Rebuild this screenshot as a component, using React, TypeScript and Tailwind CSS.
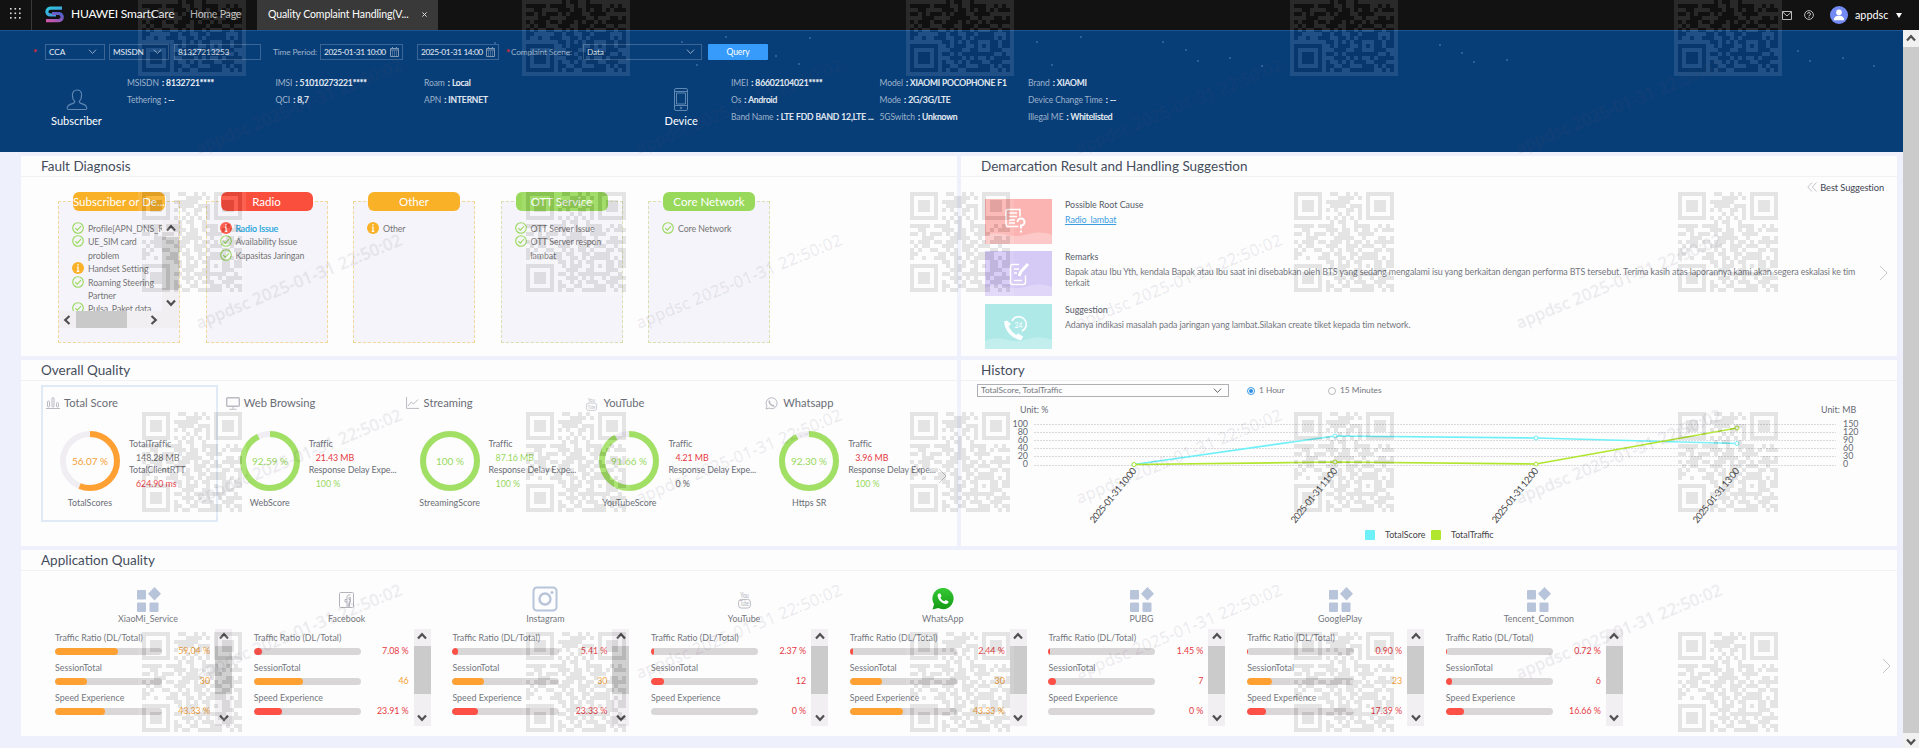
import type { ReactNode } from 'react'
import clsx from 'clsx'

type Tone = 'green' | 'orange' | 'red' | 'gray'

const textTone: Record<Tone, string> = {
  green: 'text-[#98d95b]',
  orange: 'text-[#f59f33]',
  red: 'text-[#e6393f]',
  gray: 'text-[#666]',
}

const QR = [
  '1111111001100101001111111',
  '1000001000011110101000001',
  '1011101011111100001011101',
  '1011101001111011101011101',
  '1011101010100110101011101',
  '1000001000010100101000001',
  '1111111010101010101111111',
  '0000000001011001000000000',
  '1111101111001001111001010',
  '0011000011101101011010111',
  '1101011101011100111100000',
  '0001110000111110010001101',
  '1011101101110101101011111',
  '0101100011100111011100100',
  '1010011001010110100011011',
  '1100000110110011011110001',
  '1001001110011010111110101',
  '0000000011010101100011011',
  '1111111001011100101011011',
  '1000001000111001100011100',
  '1011101011010111111110010',
  '1011101000111010100101111',
  '1011101010010101110011100',
  '1000001011001100011101011',
  '1111111010110011111100101',
]

function Watermark() {
  const codes = []
  for (let y = -28; y < 748; y += 220) {
    for (let x = 142; x < 1900; x += 384) {
      codes.push(<use key={`${x}-${y}`} href="#qr" x={x} y={y} />)
    }
  }
  const stamps = []
  for (let y = 154; y < 760; y += 175) {
    for (let x = 199; x < 1800; x += 440) {
      stamps.push(
        <text key={`${x}-${y}`} transform={`translate(${x} ${y}) rotate(-22.5)`} textLength="221">
          appdsc 2025-01-31 22:50:02
        </text>
      )
    }
  }
  return (
    <svg className="absolute inset-0 pointer-events-none" width="1919" height="748">
      <defs>
        <g id="qr">
          <rect x="-4" y="-4" width="108" height="108" fill="#fff" />
          {QR.map((row, y) =>
            [...row].map((c, x) => c === '1' && <rect key={`${x}-${y}`} x={x * 4} y={y * 4} width="4" height="4" />)
          )}
        </g>
      </defs>
      <g opacity="0.1" shapeRendering="crispEdges">{codes}</g>
      <g
        className="[font-family:'Noto_Sans',sans-serif]"
        fontSize="16.5"
        fill="#5a4a60"
        fillOpacity="0.1"
        stroke="#5a4a60"
        strokeOpacity="0.04"
        strokeWidth="0.8"
      >
        {stamps}
      </g>
    </svg>
  )
}

function Arrow({ dir }: { dir: 'up' | 'down' | 'left' | 'right' }) {
  return (
    <svg
      className={clsx('w-[10px] h-[10px]', dir === 'down' && 'rotate-180', dir === 'left' && '-rotate-90', dir === 'right' && 'rotate-90')}
      viewBox="0 0 10 10"
      fill="none"
      stroke="#505050"
      strokeWidth="2.2"
    >
      <path d="M1 7.5L5 3.2L9 7.5" />
    </svg>
  )
}

function Chevron({ className }: { className?: string }) {
  return (
    <svg className={className} viewBox="0 0 10 6" fill="none" stroke="currentColor" strokeWidth="1">
      <path d="M1 .7L5 5L9 .7" />
    </svg>
  )
}

function NextArrow() {
  return (
    <svg className="w-[9px] h-[16px] text-[#c9c6cc]" viewBox="0 0 9 16" fill="none" stroke="currentColor" strokeWidth="1">
      <path d="M1 1L8 8L1 15" />
    </svg>
  )
}

function Calendar() {
  return (
    <svg
      className="w-[9px] h-[10px] shrink-0 ml-auto mr-[3px] text-[#7d97b5]"
      viewBox="0 0 9 10"
      fill="none"
      stroke="currentColor"
      strokeWidth="1"
    >
      <path d="M.5 1.5h8v8h-8zM0 3h9M2.5 0v2M6.5 0v2" />
      <path d="M2.5 4v5M4.5 4v5M6.5 4v5" strokeOpacity=".5" />
    </svg>
  )
}

function TopBar() {
  return (
    <header className="h-[30px] shrink-0 bg-[#121212] flex items-center text-white">
      <div className="w-[32px] h-full border-r border-[#3a3a3a] flex items-center justify-center pb-1">
        <svg className="w-[11px] h-[11px]" viewBox="0 0 11 11" fill="#e0e0e0">
          {[0, 4.5, 9].map((y) => [0, 4.5, 9].map((x) => <rect key={`${x}${y}`} x={x} y={y} width="1.6" height="1.6" />))}
        </svg>
      </div>
      <svg className="w-[20px] h-[17px] ml-[12px] mb-[2px]" viewBox="0 0 20 17" fill="none">
        <defs>
          <linearGradient id="logoTop" x1="0" y1="0" x2="1" y2="1">
            <stop stopColor="#2fc6dd" />
            <stop offset="1" stopColor="#4a8fe0" />
          </linearGradient>
          <linearGradient id="logoBottom" x1="1" y1="0" x2="0" y2="1">
            <stop stopColor="#4b5fd0" />
            <stop offset="1" stopColor="#d255a8" />
          </linearGradient>
        </defs>
        <path d="M18 2.2H6.5a3.5 3.5 0 0 0-3 5.5Q4.5 9 7 9h5" stroke="url(#logoTop)" strokeWidth="3.2" />
        <path d="M8 7.5h7q3.2.5 3.2 3.6t-3.2 3.6H2" stroke="url(#logoBottom)" strokeWidth="3.2" />
      </svg>
      <span className="ml-[7px] w-[119px] text-[12px] tracking-[-0.2px] mb-[2px]">HUAWEI SmartCare</span>
      <span className="w-[67px] text-[10.5px] tracking-[-0.2px] text-[#c4c4c4] mb-px">Home Page</span>
      <div className="w-[181px] h-full bg-[#393939] flex items-center pl-[11px] pb-px text-[10.5px]">
        <span className="w-[154px] whitespace-nowrap tracking-[-0.1px]">Quality Complaint Handling(V...</span>
        <svg className="w-[5px] h-[5px]" viewBox="0 0 6 6" stroke="#ddd" strokeWidth="1.2">
          <path d="M.5 .5l5 5M5.5 .5l-5 5" />
        </svg>
      </div>
      <div className="ml-auto flex items-center pr-[17px]">
        <svg className="w-[10px] h-[9px]" viewBox="0 0 10 9" fill="none" stroke="#bbb">
          <path d="M.5 .5h9v8h-9zM.5 .8L5 5L9.5 .8" />
        </svg>
        <svg className="w-[10px] h-[10px] ml-[12px]" viewBox="0 0 10 10" fill="none" stroke="#bbb">
          <circle cx="5" cy="5" r="4.4" />
          <path d="M3.5 4a1.5 1.5 0 1 1 1.5 1.5v1M5 7v1" />
        </svg>
        <svg className="w-[18px] h-[18px] ml-[16px]" viewBox="0 0 18 18">
          <circle cx="9" cy="9" r="9" fill="#7389f3" />
          <circle cx="9" cy="6.4" r="2.8" fill="#fff" />
          <path d="M3.8 14.2c0-3 2-4.4 5.2-4.4s5.2 1.4 5.2 4.4z" fill="#fff" />
        </svg>
        <span className="ml-[7px] w-[41px] text-[10.8px]">appdsc</span>
        <svg className="w-[6px] h-[5px]" viewBox="0 0 6 5" fill="#fff">
          <path d="M0 0h6L3 5z" />
        </svg>
      </div>
    </header>
  )
}

function Box({ children, className }: { children: ReactNode; className: string }) {
  return (
    <div className={clsx('h-[16px] border border-[#3b6594] flex items-center pl-[3px] text-[#e6edf5] whitespace-nowrap', className)}>
      {children}
    </div>
  )
}

const subscriberInfo = [
  ['MSISDN', '8132721****'],
  ['IMSI', '51010273221****'],
  ['Roam', 'Local'],
  ['Tethering', '--'],
  ['QCI', '8,7'],
  ['APN', 'INTERNET'],
]

const deviceInfo = [
  ['IMEI', '86602104021****'],
  ['Model', 'XIAOMI POCOPHONE F1'],
  ['Brand', 'XIAOMI'],
  ['Os', 'Android'],
  ['Mode', '2G/3G/LTE'],
  ['Device Change Time', '--'],
  ['Band Name', 'LTE FDD BAND 12,LTE ...'],
  ['5GSwitch', 'Unknown'],
  ['Illegal ME', 'Whitelisted'],
]

function InfoGrid({ items }: { items: string[][] }) {
  return (
    <div className="grid grid-cols-[148.5px_148.5px_148.5px] auto-rows-[17px] content-start pt-px text-[8.5px] leading-[17px] tracking-[-0.1px]">
      {items.map(([label, value]) => (
        <div key={label} className="whitespace-nowrap text-[#9db2ca]">
          {label} <span className="ml-[1px] text-[#f2f6fa] [-webkit-text-stroke:0.2px_#f2f6fa]">: {value}</span>
        </div>
      ))}
    </div>
  )
}

const stars = [
  [682, 42], [726, 37], [810, 38], [776, 56], [799, 64], [697, 65], [1037, 42], [1081, 37], [1163, 42], [1186, 50],
  [1198, 61], [1230, 58], [1262, 66], [1052, 65], [1440, 45], [1462, 53], [1474, 62], [1507, 60], [1798, 51],
  [1810, 61], [1843, 58], [1874, 66], [495, 43],
]

function SearchPanel() {
  return (
    <section className="relative h-[122px] shrink-0 bg-[#083e78] border-t border-[#1c5491]">
      <svg className="absolute left-0 -top-[31px]" width="1903" height="100" fill="#3f74ad">
        {stars.map(([x, y]) => (
          <circle key={`${x}-${y}`} cx={x} cy={y} r="0.9" />
        ))}
      </svg>
      <div className="relative flex items-center pt-[13px] text-[8.3px] tracking-[-0.15px] text-[#9db2ca]">
        <span className="w-[45px] pl-[33px] text-[10px] leading-[12px] font-bold text-[#e0262d]">*</span>
        <Box className="w-[60px] mr-[4px]">CCA<Chevron className="w-[9px] ml-auto mr-[7px] text-[#9db2ca]" /></Box>
        <Box className="w-[60px] mr-[5px]">MSISDN<Chevron className="w-[9px] ml-auto mr-[6px] text-[#9db2ca]" /></Box>
        <Box className="w-[87px] mr-[12px]">81327213253</Box>
        <span className="w-[47px] whitespace-nowrap">Time Period:</span>
        <Box className="w-[83px] mr-[14px] tracking-[-0.4px]">2025-01-31 10:00<Calendar /></Box>
        <Box className="w-[82px] mr-[7px] tracking-[-0.4px]">2025-01-31 14:00<Calendar /></Box>
        <span className="w-[5px] text-[10px] leading-[12px] font-bold text-[#e0262d]">*</span>
        <span className="w-[72px] whitespace-nowrap">Complaint Scene:</span>
        <Box className="w-[119px] mr-[6px]">Data<Chevron className="w-[9px] ml-auto mr-[6px] text-[#9db2ca]" /></Box>
        <button className="w-[60px] h-[16px] rounded-[1px] bg-[#379bfb] text-[8.6px] text-white">Query</button>
      </div>
      <div className="relative flex pt-[14px]">
        <div className="w-[127px] pl-[26px] pt-[15px] flex flex-col items-center">
          <svg className="w-[22px] h-[22px]" viewBox="0 0 22 22" fill="none" stroke="#5f87b3" strokeWidth="1.1">
            <path d="M11 1c3 0 4.6 2 4.6 5 0 3-1 5.2-2.4 6.4.1 1.3.7 1.8 2.3 2.2 3 .7 5 1.7 5.3 4.4.1 1.2-.5 1.5-1.5 1.5H2.7c-1 0-1.600-.3-1.5-1.5.3-2.700 2.3-3.700 5.3-4.400 1.600-.4 2.200-.9 2.300-2.200C7.400 11.200 6.400 9 6.400 6c0-3 1.600-5 4.600-5z" />
          </svg>
          <span className="mt-[2px] text-[11px] leading-[16px] text-white">Subscriber</span>
        </div>
        <InfoGrid items={subscriberInfo} />
        <div className="w-[158.5px] pl-[59px] pt-[14px] flex flex-col items-center">
          <svg className="w-[16px] h-[23px]" viewBox="0 0 16 23" fill="none" stroke="#5f87b3">
            <rect x="1.5" y=".5" width="13" height="22" rx="1.5" />
            <path d="M1.5 3.5h13M1.5 17.5h13M3.5 5h9v11h-9z" />
            <circle cx="8" cy="20" r=".8" />
          </svg>
          <span className="mt-[2px] text-[11px] leading-[16px] text-white">Device</span>
        </div>
        <InfoGrid items={deviceInfo} />
      </div>
    </section>
  )
}

function Panel({ title, children, className }: { title: string; children: ReactNode; className: string }) {
  return (
    <section className={clsx('bg-[#fdfdfe] flex flex-col', className)}>
      <h2 className="h-[21px] shrink-0 border-b border-[#f2f1f5] pl-[20px] text-[13.5px] leading-[20px] text-[#454d5c]">
        {title}
      </h2>
      {children}
    </section>
  )
}

function StatusIcon({ status }: { status: 'ok' | 'warn' | 'error' }) {
  if (status === 'ok') {
    return (
      <svg className="w-[12px] h-[12px] shrink-0" viewBox="0 0 12 12" fill="none" stroke="#98d95b" strokeWidth="1.1">
        <circle cx="6" cy="6" r="5.3" />
        <path d="M3.3 6.1l2 2L9 4.2" />
      </svg>
    )
  }
  return (
    <svg className="w-[12px] h-[12px] shrink-0" viewBox="0 0 12 12">
      <circle cx="6" cy="6" r="6" fill={status === 'warn' ? '#f9b128' : '#fb4f3e'} />
      <path d="M6 2v1.5M4.8 5H6v4M4.7 9.3h2.6" stroke="#fff" strokeWidth="1.2" fill="none" />
    </svg>
  )
}

type Fault = {
  title: string
  pill: string
  border: string
  items: { text: string; status: 'ok' | 'warn' | 'error' }[]
}

const faults: Fault[] = [
  {
    title: 'Subscriber or De...',
    pill: 'bg-[#f9b128]',
    border: 'border-[#f3d79a]',
    items: [
      { text: 'Profile[APN_DNS_R', status: 'ok' },
      { text: 'UE_SIM card problem', status: 'ok' },
      { text: 'Handset Setting', status: 'warn' },
      { text: 'Roaming Steering Partner', status: 'ok' },
      { text: 'Pulsa_Paket data', status: 'ok' },
    ],
  },
  {
    title: 'Radio',
    pill: 'bg-[#fb4f3e]',
    border: 'border-[#f3d79a]',
    items: [
      { text: 'Radio Issue', status: 'error' },
      { text: 'Availability Issue', status: 'ok' },
      { text: 'Kapasitas Jaringan', status: 'ok' },
    ],
  },
  { title: 'Other', pill: 'bg-[#f9b128]', border: 'border-[#f3d79a]', items: [{ text: 'Other', status: 'warn' }] },
  {
    title: 'OTT Service',
    pill: 'bg-[#98d95b]',
    border: 'border-[#dbdfae]',
    items: [
      { text: 'OTT Server Issue', status: 'ok' },
      { text: 'OTT Server respon lambat', status: 'ok' },
    ],
  },
  { title: 'Core Network', pill: 'bg-[#98d95b]', border: 'border-[#dbdfae]', items: [{ text: 'Core Network', status: 'ok' }] },
]

function FaultCard({ fault, scroll }: { fault: Fault; scroll: boolean }) {
  return (
    <div className={clsx('w-[122px] h-[142px] mt-[24px] bg-[#f5f4fa] border border-dashed flex flex-col', fault.border)}>
      <div className={clsx('w-[92px] h-[19px] -mt-[10px] ml-[14px] shrink-0 rounded-[6px] text-center text-[11.5px] leading-[19px] text-white whitespace-nowrap', fault.pill)}>
        {fault.title}
      </div>
      <div className={clsx('flex mt-[9px]', scroll && 'h-[91px] overflow-hidden')}>
        <ul className="flex-1 pl-[13px] pt-[2px] text-[8.8px] leading-[13.4px] tracking-[-0.1px] text-[#757575]">
          {fault.items.map((item) => (
            <li key={item.text} className="flex gap-[4px]">
              <StatusIcon status={item.status} />
              <span className={clsx('w-[74px] shrink-0', item.status === 'error' && 'text-[#22a5dc] [-webkit-text-stroke:0.2px_#22a5dc]')}>
                {item.text}
              </span>
            </li>
          ))}
        </ul>
        {scroll && (
          <div className="w-[17px] bg-[#f1eff2] flex flex-col items-center z-0 pt-[3px]">
            <Arrow dir="up" />
            <div className="w-full h-[53px] mt-[4px] bg-[#cbcbcb]" />
            <div className="mt-[8px]"><Arrow dir="down" /></div>
          </div>
        )}
      </div>
      {scroll && (
        <div className="h-[17px] bg-[#f1eff2] flex items-center pl-[3px]">
          <Arrow dir="left" />
          <div className="w-[51px] h-full ml-[4px] mr-[22px] bg-[#c9c9c9]" />
          <Arrow dir="right" />
        </div>
      )}
    </div>
  )
}

const results = [
  {
    title: 'Possible Root Cause',
    bg: 'bg-[#fbb4b1]',
    wave: '#fcc9c8',
    icon: (
      <>
        <path d="M33.5 27.5H23a2 2 0 0 1-2-2v-13a2 2 0 0 1 2-2h12v7M24 14h8M24 17.5h8M24 21h6M24 24h6" />
        <path d="M32.5 23a3.5 3.5 0 1 1 3.5 3.5v3M36 31.5v2" strokeWidth="2" />
      </>
    ),
    body: <a className="text-[#3c9ee0] underline">Radio_lambat</a>,
  },
  {
    title: 'Remarks',
    bg: 'bg-[#d5c9f5]',
    wave: '#dfd6f8',
    icon: (
      <>
        <path d="M34 13.5h-6.5a2 2 0 0 0-2 2v16a2 2 0 0 0 2 2h11a2 2 0 0 0 2-2v-7M29 18h5M29 22h3M29 29.5h8" />
        <path d="M34 25l2-4.5 7-7.5" strokeWidth="3" />
      </>
    ),
    body: (
      <>
        Bapak atau Ibu Yth, kendala Bapak atau Ibu saat ini disebabkan oleh BTS yang sedang mengalami isu yang berkaitan dengan
        performa BTS tersebut. Terima kasih atas laporannya kami akan segera eskalasi ke tim
        <br />
        terkait
      </>
    ),
  },
  {
    title: 'Suggestion',
    bg: 'bg-[#aee9e8]',
    wave: '#c2efee',
    icon: (
      <>
        <path d="M21 17c0 9 7.5 16.5 15.5 17.5" strokeWidth="3.5" />
        <path d="M20.5 17.5l4.5 3.5M32 30.5l5.5 3.5" strokeWidth="3" />
        <path d="M27 17a7.5 7.5 0 1 1 10 10" />
        <text x="29.5" y="23.5" fontSize="7" fill="#fff" stroke="none">24</text>
      </>
    ),
    body: <>Adanya indikasi masalah pada jaringan yang lambat.Silakan create tiket kepada tim network.</>,
  },
]

function Demarcation() {
  return (
    <Panel title="Demarcation Result and Handling Suggestion" className="w-[936px]">
      <div className="flex justify-end items-center h-[22px] pr-[13px] text-[9.3px] tracking-[-0.1px] text-[#3f4552]">
        <svg className="w-[10px] h-[10px] mr-[3px] mb-[2px]" viewBox="0 0 10 10" fill="none" stroke="#c5c2c8">
          <path d="M5 .5L.8 5L5 9.5M9.5 .5L5.3 5l4.2 4.5" />
        </svg>
        Best Suggestion
      </div>
      <div className="flex items-center">
        <div className="w-[918px] pl-[24px] flex flex-col gap-[7px]">
          {results.map((r) => (
            <div key={r.title} className="flex gap-[13px] h-[45.3px]">
              <svg className={clsx('w-[67px] h-[45px] shrink-0', r.bg)} viewBox="0 0 67 45" fill="none" stroke="#fff" strokeWidth="1.5">
                <path d="M0 37c8-4 14-3 22-1s14 1 22-1 14-2 23 1v9H0z" fill={r.wave} stroke="none" />
                {r.icon}
              </svg>
              <div className="text-[8.9px] text-[#74777d] leading-[11px] tracking-[-0.1px] whitespace-nowrap">
                <div className="leading-[12px] mb-[3px] tracking-normal text-[#555b66]">{r.title}</div>
                {r.body}
              </div>
            </div>
          ))}
        </div>
        <div className="mb-[2px]"><NextArrow /></div>
      </div>
    </Panel>
  )
}

function YouTubeIcon({ className }: { className?: string }) {
  return (
    <svg className={clsx('overflow-visible', className)} viewBox="0 0 14 16" fill="none" stroke="currentColor" strokeWidth=".8">
      <text x="3" y="6" fontSize="6.5" textLength="8" lengthAdjust="spacingAndGlyphs" fill="currentColor" stroke="none">You</text>
      <rect x="1.5" y="7.5" width="11" height="8" rx="2.5" />
      <text x="3" y="14" fontSize="6.5" textLength="8" lengthAdjust="spacingAndGlyphs" fill="currentColor" stroke="none">Tube</text>
    </svg>
  )
}

function WhatsappIcon() {
  return (
    <svg className="w-[13px] h-[13px]" viewBox="0 0 13 13" fill="none" stroke="currentColor">
      <path d="M1 12l.9-2.9a5.5 5.5 0 1 1 2.1 2z" />
      <path d="M4.5 3.5c-.8 1.5.3 3 1.3 4s2.3 1.7 3.7 1.2" strokeWidth="1.5" />
    </svg>
  )
}

const scores: {
  title: string
  icon: ReactNode
  score: number
  label: string
  scoreText: string
  tone: Tone
  rows: [string, string, Tone][]
}[] = [
  {
    title: 'Total Score',
    icon: (
      <svg className="w-[14px] h-[12px]" viewBox="0 0 14 12" fill="none" stroke="currentColor">
        <path d="M0 11.5h14" />
        <rect x="1.5" y="4" width="2" height="6" rx="1" />
        <rect x="6" y=".5" width="2" height="9.5" rx="1" />
        <rect x="10.5" y="5.5" width="2" height="4.5" rx="1" />
      </svg>
    ),
    score: 56.07,
    scoreText: '56.07 %',
    label: 'TotalScores',
    tone: 'orange',
    rows: [['TotalTraffic', '148.28 MB', 'gray'], ['TotalClientRTT', '624.90 ms', 'red']],
  },
  {
    title: 'Web Browsing',
    icon: (
      <svg className="w-[14px] h-[13px]" viewBox="0 0 14 13" fill="none" stroke="currentColor">
        <rect x=".7" y=".7" width="12.6" height="8.6" rx="1" strokeWidth="1.4" />
        <path d="M7 9.5v2.5M3.5 12.3h7" />
      </svg>
    ),
    score: 92.59,
    scoreText: '92.59 %',
    label: 'WebScore',
    tone: 'green',
    rows: [['Traffic', '21.43 MB', 'red'], ['Response Delay Expe...', '100 %', 'green']],
  },
  {
    title: 'Streaming',
    icon: (
      <svg className="w-[13px] h-[12px]" viewBox="0 0 13 12" fill="none" stroke="currentColor">
        <path d="M.6 0v11.4H13M2 9l3.2-4 2.3 2 4.5-4.5" />
      </svg>
    ),
    score: 100,
    scoreText: '100 %',
    label: 'StreamingScore',
    tone: 'green',
    rows: [['Traffic', '87.16 MB', 'green'], ['Response Delay Expe...', '100 %', 'green']],
  },
  {
    title: 'YouTube',
    icon: <YouTubeIcon className="w-[13px] h-[15px]" />,
    score: 91.66,
    scoreText: '91.66 %',
    label: 'YouTubeScore',
    tone: 'green',
    rows: [['Traffic', '4.21 MB', 'red'], ['Response Delay Expe...', '0 %', 'gray']],
  },
  {
    title: 'Whatsapp',
    icon: <WhatsappIcon />,
    score: 92.3,
    scoreText: '92.30 %',
    label: 'Https SR',
    tone: 'green',
    rows: [['Traffic', '3.96 MB', 'red'], ['Response Delay Expe...', '100 %', 'green']],
  },
]

function OverallQuality() {
  const length = 2 * Math.PI * 27
  return (
    <Panel title="Overall Quality" className="w-[936px]">
      <div className="flex pl-[20px] pt-[4px]">
        {scores.map((s, i) => (
          <div
            key={s.title}
            className={clsx('w-[177px] h-[137px] shrink-0 border-2 mr-[2.8px]', i === 0 ? 'border-[#e0eaf7]' : 'border-transparent')}
          >
            <div className="flex items-center h-[16px] mt-[8px] pl-[3px] text-[#babac2]">
              <span className="w-[18px]">{s.icon}</span>
              <span className="text-[11.2px] text-[#6a6d75]">{s.title}</span>
            </div>
            <div className="flex pt-[20px] pl-[17px]">
              <div className="w-[60px] flex flex-col items-center">
                <svg className="w-[60px] h-[60px]" viewBox="0 0 60 60" fill="none" strokeWidth="6">
                  <circle cx="30" cy="30" r="27" stroke="#f0eef2" />
                  <circle
                    cx="30"
                    cy="30"
                    r="27"
                    stroke={s.tone === 'orange' ? '#ffa033' : '#a2e065'}
                    strokeDasharray={`${(length * s.score) / 100} ${length}`}
                    transform="rotate(-90 30 30)"
                  />
                  <text
                    x="30"
                    y="33.5"
                    textAnchor="middle"
                    fontSize="10"
                    stroke="none"
                    fill={s.tone === 'orange' ? '#f59f33' : '#98d95b'}
                  >
                    {s.scoreText}
                  </text>
                </svg>
                <span className="mt-[6px] text-[8.9px] leading-[12px] text-[#6a6d75]">{s.label}</span>
              </div>
              <div className="pl-[9px] pt-[7px] text-[8.9px] tracking-[-0.08px] text-[#6a6d75] whitespace-nowrap">
                {s.rows.map(([name, value, tone]) => (
                  <div key={name}>
                    <div className="leading-[12px] mb-[1px]">{name}</div>
                    <div className={clsx('pl-[7px] leading-[13px]', textTone[tone])}>{value}</div>
                  </div>
                ))}
              </div>
            </div>
          </div>
        ))}
        <div className="pt-[83px] ml-[-2px]"><NextArrow /></div>
      </div>
    </Panel>
  )
}

const hours = ['10:00', '11:00', '12:00', '13:00']
const totalScore = [464.5, 436, 438, 443.5]
const totalTraffic = [464.5, 462, 464, 428]

function Line({ points, color }: { points: number[]; color: string }) {
  return (
    <g stroke={color} fill="#fdfdfe">
      <polyline points={points.map((y, i) => `${1134 + i * 201},${y}`).join(' ')} fill="none" strokeWidth="1.7" />
      {points.map((y, i) => (
        <circle key={i} cx={1134 + i * 201} cy={y} r="2" />
      ))}
    </g>
  )
}

function Radio({ label, checked }: { label: string; checked?: boolean }) {
  return (
    <span className="flex items-center gap-[4px]">
      <span className={clsx('w-[8px] h-[8px] rounded-full border flex items-center justify-center', checked ? 'border-[#3a9be8]' : 'border-[#bbb]')}>
        {checked && <span className="w-[4px] h-[4px] rounded-full bg-[#2c8fe6]" />}
      </span>
      {label}
    </span>
  )
}

function History() {
  return (
    <Panel title="History" className="w-[936px]">
      <div className="flex items-center h-[19px] pl-[16px] text-[8.3px] text-[#74777d]">
        <div className="w-[252px] h-[13px] mr-[18px] border border-[#b0b0b4] flex items-center pl-[3px]">
          TotalScore, TotalTraffic
          <Chevron className="w-[9px] ml-auto mr-[6px] text-[#555]" />
        </div>
        <div className="w-[81px]"><Radio label="1 Hour" checked /></div>
        <Radio label="15 Minutes" />
      </div>
      <svg className="w-[936px] h-[146px]" viewBox="961 400 936 146" fontSize="8.9" fill="#666a72">
        <text x="1020" y="413">Unit: %</text>
        <text x="1821" y="413">Unit: MB</text>
        {[0, 1, 2, 3, 4, 5].map((i) => (
          <g key={i}>
            <text x="1028" y={467.3 - i * 8.1} textAnchor="end">{i * 20}</text>
            <text x="1843" y={467.3 - i * 8.1}>{i * 30}</text>
            <path d={`M1034 ${Math.round(464.5 - i * 8.1) + 0.5}h802`} stroke="#d9d9dd" strokeDasharray="2 1" />
          </g>
        ))}
        <Line points={totalScore} color="#6ef0f8" />
        <Line points={totalTraffic} color="#b0e62e" />
        {hours.map((hour, i) => (
          <text key={hour} transform={`translate(${1137 + i * 201} 471) rotate(-51)`} textAnchor="end" fontSize="9.4" fill="#444" textLength="68">
            2025-01-31 {hour}
          </text>
        ))}
        <rect x="1365" y="530" width="10" height="10" rx="1" fill="#6ef0f8" />
        <rect x="1431" y="530" width="10" height="10" rx="1" fill="#b0e62e" />
        <text x="1385" y="538" fill="#444">TotalScore</text>
        <text x="1451" y="538" fill="#444">TotalTraffic</text>
      </svg>
    </Panel>
  )
}

function AppsIcon() {
  return (
    <svg className="w-[25px] h-[25px]" viewBox="0 0 25 25" fill="#b8c4da">
      <rect x="1" y="3" width="9" height="9.5" rx="1" />
      <path d="M18.5 0l6.5 6.8-6.5 6.7-6.5-6.7z" />
      <rect x="1" y="15.5" width="9" height="9.5" rx="1" />
      <rect x="13.5" y="15.5" width="9" height="9.5" rx="1" />
    </svg>
  )
}

function FacebookIcon() {
  return (
    <svg className="w-[15px] h-[16px] mb-[4px]" viewBox="0 0 15 16" fill="none" stroke="#b4b4bc">
      <rect x=".5" y=".5" width="14" height="15" rx="1" />
      <path d="M11.5 3H10c-1.5 0-2 .8-2 2v10.5M10 15V10h1.5V7.5H10V5.5h1.5zM8 7.5H6V10h2" />
    </svg>
  )
}

function InstagramIcon() {
  return (
    <svg className="w-[26px] h-[26px]" viewBox="0 0 26 26" fill="none" stroke="#b8c4da" strokeWidth="2">
      <rect x="1.5" y="1.5" width="23" height="23" rx="3.5" />
      <circle cx="13" cy="13" r="5.5" strokeWidth="2.4" />
      <circle cx="20" cy="6.5" r="1.5" fill="#b8c4da" stroke="none" />
    </svg>
  )
}

function WhatsappLogo() {
  return (
    <svg className="w-[22px] h-[22px] mb-[2px]" viewBox="0 0 22 22">
      <defs>
        <linearGradient id="wa" x1="0" y1="0" x2="0" y2="1">
          <stop stopColor="#35c935" />
          <stop offset="1" stopColor="#149a14" />
        </linearGradient>
      </defs>
      <path d="M.5 21.5l1.6-5.2A10.6 10.6 0 1 1 6.2 20z" fill="url(#wa)" />
      <path d="M7 5.5c-.9.2-1.7 1.5-1.3 3 .8 3.7 4.5 7.2 8.3 7.5 1.5 0 2.5-1 2.6-2.4l-2.8-1.6-1.4 1.3c-1.8-.6-3.3-2.1-4-3.9L9.6 8 8.3 5.5z" fill="#fff" />
    </svg>
  )
}

type Metric = [string, number, Tone]

const apps: { name: string; icon: ReactNode; metrics: [Metric, Metric, Metric] }[] = [
  { name: 'XiaoMi_Service', icon: <AppsIcon />, metrics: [['59.04 %', 59, 'orange'], ['30', 30, 'orange'], ['43.33 %', 47, 'orange']] },
  { name: 'Facebook', icon: <FacebookIcon />, metrics: [['7.08 %', 7.5, 'red'], ['46', 46, 'orange'], ['23.91 %', 26, 'red']] },
  { name: 'Instagram', icon: <InstagramIcon />, metrics: [['5.41 %', 5, 'red'], ['30', 30, 'orange'], ['23.33 %', 23.5, 'red']] },
  { name: 'YouTube', icon: <YouTubeIcon className="w-[15px] h-[18px] mb-[3px] text-[#b0b0b6]" />, metrics: [['2.37 %', 2.8, 'red'], ['12', 12, 'red'], ['0 %', 0, 'red']] },
  { name: 'WhatsApp', icon: <WhatsappLogo />, metrics: [['2.44 %', 3, 'red'], ['30', 30, 'orange'], ['43.33 %', 50, 'orange']] },
  { name: 'PUBG', icon: <AppsIcon />, metrics: [['1.45 %', 1, 'red'], ['7', 7, 'red'], ['0 %', 0, 'red']] },
  { name: 'GooglePlay', icon: <AppsIcon />, metrics: [['0.90 %', 1, 'red'], ['23', 23, 'orange'], ['17.39 %', 17.5, 'red']] },
  { name: 'Tencent_Common', icon: <AppsIcon />, metrics: [['0.72 %', 1, 'red'], ['6', 6, 'red'], ['16.66 %', 16.6, 'red']] },
]

const metricNames = ['Traffic Ratio (DL/Total)', 'SessionTotal', 'Speed Experience']

function ApplicationQuality() {
  return (
    <Panel title="Application Quality" className="h-[186px]">
      <div className="flex pl-[34px]">
        {apps.map((app) => (
          <div key={app.name} className="w-[198.7px] shrink-0 text-[8.9px] text-[#74777d]">
            <div className="h-[41px] w-[186px] flex flex-col items-center justify-end">{app.icon}</div>
            <div className="h-[17px] w-[186px] text-center leading-[14px]">{app.name}</div>
            <div className="flex">
              <div className="w-[155px] pt-[3px] mr-[5px]">
                {app.metrics.map(([value, percent, tone], i) => (
                  <div key={i} className="h-[30px]">
                    <div className="leading-[12px]">{metricNames[i]}</div>
                    <div className="flex items-center h-[13px]">
                      <div className="w-[107px] h-[7px] mt-[2px] rounded-full bg-[#d9d6d8] overflow-hidden">
                        <div
                          className={clsx('h-full rounded-full', tone === 'orange' ? 'bg-[#ffa033]' : 'bg-[#fd5046]')}
                          style={{ width: `${percent}%` }}
                        />
                      </div>
                      <span className={clsx('ml-auto tracking-[-0.05px]', textTone[tone])}>{value}</span>
                    </div>
                  </div>
                ))}
              </div>
              <div className="w-[17px] h-[97px] bg-[#f1eff2] flex flex-col items-center pt-[2px]">
                <Arrow dir="up" />
                <div className="w-full h-[48px] mt-[5px] bg-[#cbcbcb]" />
                <div className="mt-[19px]"><Arrow dir="down" /></div>
              </div>
            </div>
          </div>
        ))}
        <div className="ml-auto mr-[6px] pt-[87px]"><NextArrow /></div>
      </div>
    </Panel>
  )
}

export default function App() {
  return (
    <div className="relative w-[1919px] h-[748px] overflow-hidden flex flex-col bg-[#eef0fb] [font-family:Lato,sans-serif]">
      <TopBar />
      <div className="flex flex-1 min-h-0">
        <main className="w-[1903px] flex flex-col">
          <SearchPanel />
          <div className="flex flex-col gap-[4px] pl-[21px] pr-[6px] pt-[4px]">
            <div className="flex gap-[4px] h-[200px]">
              <Panel title="Fault Diagnosis" className="w-[936px]">
                <div className="flex gap-[25.5px] pl-[37px]">
                  {faults.map((fault, i) => (
                    <FaultCard key={fault.title} fault={fault} scroll={i === 0} />
                  ))}
                </div>
              </Panel>
              <Demarcation />
            </div>
            <div className="flex gap-[4px] h-[186px]">
              <OverallQuality />
              <History />
            </div>
            <ApplicationQuality />
          </div>
        </main>
        <aside className="w-[16px] bg-[#f1f1f1] flex flex-col items-center justify-between pt-[3px] pb-px">
          <Arrow dir="up" />
          <div className="w-full flex-1 my-[4px] bg-[#cbcbcb]" />
          <Arrow dir="down" />
        </aside>
      </div>
      <Watermark />
    </div>
  )
}
